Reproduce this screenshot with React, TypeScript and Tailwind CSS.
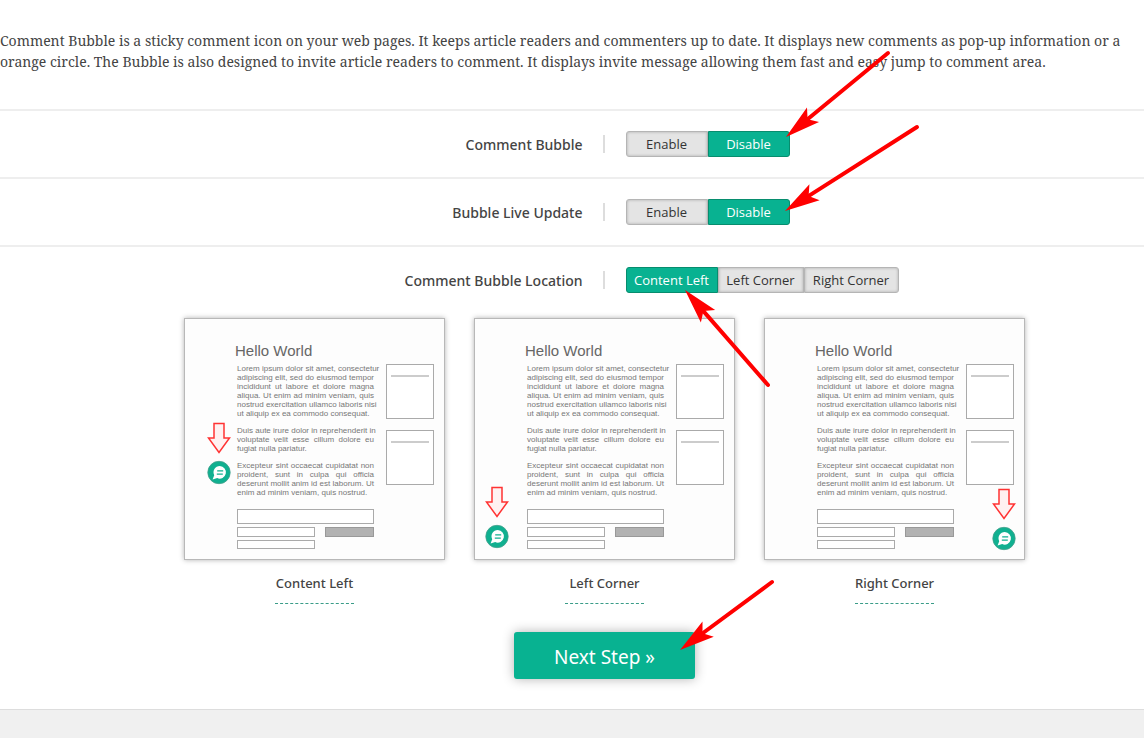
import type { ReactNode } from "react";

function Pointer({ dx, dy, className }: { dx: number; dy: number; className: string }) {
  const len = Math.hypot(dx, dy);
  const angle = (Math.atan2(dy, dx) * 180) / Math.PI;
  return (
    <svg
      className={`pointer-events-none absolute z-10 overflow-visible ${className}`}
      width="1"
      height="1"
      aria-hidden="true"
    >
      <g transform={`rotate(${angle})`}>
        <path d={`M24 0H${len}`} stroke="#f00" strokeWidth="4" strokeLinecap="round" />
        <path d="M0 0L35 -9.5L28 0L35 9.5Z" fill="#f00" />
      </g>
    </svg>
  );
}

function Toggle({ label, active, className }: { label: string; active?: boolean; className: string }) {
  return (
    <button
      type="button"
      aria-pressed={!!active}
      className={`h-[26px] border font-['Open_Sans','Noto_Sans',sans-serif] text-[13px] leading-6 whitespace-nowrap first:rounded-l-[3px] last:rounded-r-[3px] ${
        active
          ? "border-[#078d6e] bg-[#08b291] text-white"
          : "border-[#b5b5b5] bg-[#e4e4e4] text-[#333] shadow-[inset_0_0_3px_rgba(0,0,0,0.25)]"
      } ${className}`}
    >
      {label}
    </button>
  );
}

function Row({ label, pointer, children }: { label: string; pointer: ReactNode; children: ReactNode }) {
  return (
    <div role="group" aria-label={label} className="grid grid-cols-2 items-center border-t-2 border-[#eee] py-5">
      <div className="flex h-[18px] items-center justify-end border-r-2 border-[#ddd] pr-5 text-[14px] font-medium text-[#444]">
        {label}
      </div>
      <div className="relative pl-[21px]">
        <div className="flex">{children}</div>
        {pointer}
      </div>
    </div>
  );
}

const paragraphs = [
  [
    "Lorem ipsum dolor sit amet, consectetur",
    "adipiscing elit, sed do eiusmod tempor",
    "incididunt ut labore et dolore magna",
    "aliqua. Ut enim ad minim veniam, quis",
    "nostrud exercitation ullamco laboris nisi",
    "ut aliquip ex ea commodo consequat.",
  ],
  ["Duis aute irure dolor in reprehenderit in", "voluptate velit esse cillum dolore eu", "fugiat nulla pariatur."],
  [
    "Excepteur sint occaecat cupidatat non",
    "proident, sunt in culpa qui officia",
    "deserunt mollit anim id est laborum. Ut",
    "enim ad minim veniam, quis nostrud.",
  ],
];

function Marker({ className }: { className: string }) {
  return (
    <svg className={`absolute ${className}`} width="24" height="63" viewBox="0 0 24 63" aria-hidden="true">
      <path d="M7 1.5H17V16H22.5L12 30.5L1.5 16H7Z" fill="#fff1f1" stroke="#f33" strokeWidth="1.5" />
      <circle cx="12" cy="50.5" r="11.2" fill="#10b090" stroke="#45a08c" strokeWidth="0.8" />
      <path d="M12.8 44a6.3 6.3 0 1 1-2.6 12.1L5.6 57.6L7.2 53.2A6.3 6.3 0 0 1 12.8 44Z" fill="#fff" />
      <path d="M10.2 48.9H16.2M9.8 52.1H15.8" stroke="#10b090" strokeWidth="1.4" />
    </svg>
  );
}

function SideBox() {
  return (
    <div className="h-[55px] border border-[#aaa] bg-white px-1 pt-2.5">
      <div className="border-t-2 border-[#ccc]" />
    </div>
  );
}

function Preview({ caption, marker }: { caption: string; marker: string }) {
  return (
    <figure className="w-[261px]">
      <div className="relative h-[242px] border border-[#b8b8b8] bg-[#fdfdfd] pt-[22px] pl-[50px] font-['Liberation_Sans',sans-serif] text-[#777] shadow-[0_0_5px_rgba(0,0,0,0.3)]">
        <div className="text-[15px] leading-5 text-[#666]">Hello World</div>
        <div className="flex gap-3 pt-px pl-0.5">
          <div className="w-[137px]">
            <div className="flex flex-col gap-2 pt-0.5 text-[8px] leading-[9px]">
              {paragraphs.map((lines) => (
                <div key={lines[0]}>
                  {lines.map((line, i) => (
                    <p
                      key={line}
                      className={
                        i === lines.length - 1 ? "whitespace-nowrap" : "whitespace-nowrap [text-align-last:justify]"
                      }
                    >
                      {line}
                    </p>
                  ))}
                </div>
              ))}
            </div>
            <div className="mt-3 h-[15px] border border-[#aaa] bg-white" />
            <div className="mt-[3px] flex justify-between">
              <div className="h-[10px] w-[78px] border border-[#aaa] bg-white" />
              <div className="h-[10px] w-[49px] border border-[#999] bg-[#b2b2b2]" />
            </div>
            <div className="mt-[3px] h-[9px] w-[78px] border border-[#aaa] bg-white" />
          </div>
          <div className="flex w-12 flex-col gap-[11px] pt-0.5">
            <SideBox />
            <SideBox />
          </div>
        </div>
        <Marker className={marker} />
      </div>
      <figcaption className="mx-auto mt-3 w-[79px] border-b border-dashed border-[#3a9c88] pb-[9px] text-center text-[13px] leading-[22px] font-medium whitespace-nowrap text-[#444]">
        {caption}
      </figcaption>
    </figure>
  );
}

export default function App() {
  return (
    <main className="min-h-screen overflow-hidden bg-[#f0f0f0] font-['Noto_Sans','Open_Sans',sans-serif]">
      <div className="border-b border-[#ddd] bg-white pt-[30px] pb-[30px]">
        <div className="w-[calc(100%+65px)]">
          <p className="mb-[37px] font-['Noto_Serif','Droid_Serif','DejaVu_Serif_Condensed','DejaVu_Serif',serif] text-[14px] leading-[21px] whitespace-nowrap text-[#444]">
            Comment Bubble is a sticky comment icon on your web pages. It keeps article readers and commenters up to
            date. It displays new comments as pop-up information or a
            <br />
            orange circle. The Bubble is also designed to invite article readers to comment. It displays invite message
            allowing them fast and easy jump to comment area.
          </p>
          <Row label="Comment Bubble" pointer={<Pointer dx={102} dy={-84} className="top-[6px] left-[181px]" />}>
            <Toggle label="Enable" className="w-[82px]" />
            <Toggle label="Disable" active className="w-[82px]" />
          </Row>
          <Row label="Bubble Live Update" pointer={<Pointer dx={132} dy={-84} className="top-[12px] left-[180px]" />}>
            <Toggle label="Enable" className="w-[82px]" />
            <Toggle label="Disable" active className="w-[82px]" />
          </Row>
          <Row label="Comment Bubble Location" pointer={<Pointer dx={83} dy={95} className="top-[23px] left-[80px]" />}>
            <Toggle label="Content Left" active className="w-[92px]" />
            <Toggle label="Left Corner" className="w-[86px]" />
            <Toggle label="Right Corner" className="w-[95px]" />
          </Row>
          <div className="mt-[5px] flex justify-center gap-[29px]">
            <Preview caption="Content Left" marker="top-[103px] left-[22px]" />
            <Preview caption="Left Corner" marker="top-[167px] left-[10px]" />
            <Preview caption="Right Corner" marker="top-[169px] right-[8px]" />
          </div>
          <div className="mt-7 flex justify-center">
            <div className="relative">
              <button
                type="button"
                className="h-[47px] w-[181px] rounded-[3px] bg-[#08b291] pt-1 text-[19px] text-white shadow-[0_0_12px_rgba(0,0,0,0.3)]"
              >
                Next Step »
              </button>
              <Pointer dx={92} dy={-68} className="top-[18px] left-[166px]" />
            </div>
          </div>
        </div>
      </div>
    </main>
  );
}
